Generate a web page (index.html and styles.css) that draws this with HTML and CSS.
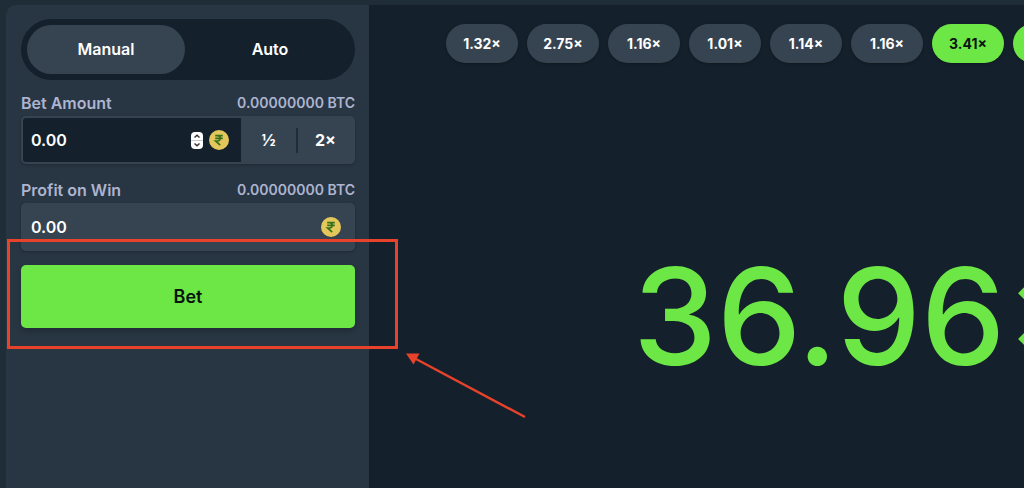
FILE: index.html
```html
<!DOCTYPE html>
<html lang="en">
<head>
<meta charset="utf-8">
<meta name="viewport" content="width=device-width, initial-scale=1">
<title>Bet</title>
<link rel="stylesheet" href="styles.css">
</head>
<body>
<svg class="defs" aria-hidden="true">
  <symbol id="rupee" viewBox="0 0 20 20">
    <circle cx="10" cy="10" r="10" fill="#e3c75b"/>
    <path d="M6.2 5.600h7.600M6.200 8.400h7.600M6.200 5.600h2.200c3.800 0 3.800 5.400 0 5.400H6.600l4.600 4.200" fill="none" stroke="#39701f" stroke-width="1.700"/>
  </symbol>
</svg>
<div class="game">
  <form class="sidebar">
    <div class="tabs">
      <button type="button" class="tab active">Manual</button>
      <button type="button" class="tab">Auto</button>
    </div>
    <div class="field">
      <div class="caption"><label for="amount">Bet Amount</label><span class="btc">0.00000000 BTC</span></div>
      <div class="group">
        <div class="box dark">
          <input id="amount" type="text" inputmode="decimal" value="0.00">
          <svg class="stepper" viewBox="0 0 12 17" aria-hidden="true">
            <rect width="12" height="17" rx="4" fill="#fff"/>
            <path d="M0 8.500h12" stroke="#c9cccf"/>
            <path d="M3.500 5.600L6 3.200l2.500 2.400M3.500 11.400L6 13.800l2.500-2.400" fill="none" stroke="#333" stroke-width="1.400"/>
          </svg>
          <svg class="coin" aria-hidden="true"><use href="#rupee"/></svg>
        </div>
        <button type="button" class="multiply">½</button>
        <span class="divider"></span>
        <button type="button" class="multiply">2×</button>
      </div>
    </div>
    <div class="field">
      <div class="caption"><label for="profit">Profit on Win</label><span class="btc">0.00000000 BTC</span></div>
      <div class="group">
        <div class="box">
          <input id="profit" type="text" value="0.00" readonly>
          <svg class="coin" aria-hidden="true"><use href="#rupee"/></svg>
        </div>
      </div>
    </div>
    <button type="button" class="bet">Bet</button>
  </form>
  <main class="stage">
    <div class="history">
      <button type="button" class="pill">1.32×</button>
      <button type="button" class="pill">2.75×</button>
      <button type="button" class="pill">1.16×</button>
      <button type="button" class="pill">1.01×</button>
      <button type="button" class="pill">1.14×</button>
      <button type="button" class="pill">1.16×</button>
      <button type="button" class="pill win">3.41×</button>
      <button type="button" class="pill win"></button>
    </div>
    <div class="result">36.96×</div>
  </main>
</div>
<div class="highlight"></div>
<svg class="arrow" viewBox="0 0 120 66" aria-hidden="true">
  <path d="M10 6L119 64" stroke="#e8432a" stroke-width="2.400"/>
  <path d="M0 0.500L13.500 0.500L7.500 11.500Z" fill="#e8432a"/>
</svg>
</body>
</html>
```

FILE: styles.css
```css
* {
  box-sizing: border-box;
}

body {
  margin: 0;
  min-height: 100vh;
  display: flex;
  padding: 5px 0 0 6px;
  background: #1f2d38;
  color: #fff;
  font-family: Inter, "Liberation Sans", sans-serif;
  font-size: 16px;
  font-weight: 600;
  overflow: hidden;
}

button,
input {
  font: inherit;
  color: inherit;
  background: none;
  border: 0;
  padding: 0;
  margin: 0;
}

.defs {
  position: absolute;
  width: 0;
  height: 0;
}

.game {
  flex: 1;
  min-width: 0;
  display: flex;
  border-top-left-radius: 10px;
  overflow: hidden;
}

.sidebar {
  flex: none;
  width: 363px;
  padding: 14px 14px 14px 15px;
  display: flex;
  flex-direction: column;
  gap: 14px;
  background: #283643;
}

.tabs {
  display: flex;
  gap: 6px;
  padding: 6px;
  border-radius: 32px;
  background: #14212c;
}

.tab {
  flex: 1;
  height: 49px;
  padding-bottom: 2px;
  border-radius: 25px;
}

.tab.active {
  background: #364452;
}

.field {
  display: flex;
  flex-direction: column;
  gap: 4px;
}

.field + .field {
  padding-top: 3px;
}

.caption {
  display: flex;
  align-items: center;
  justify-content: space-between;
  line-height: 18px;
  color: #adb4d0;
}

.btc {
  font-size: 14px;
}

.group {
  display: flex;
  align-items: center;
  padding: 2px;
  border-radius: 5px;
  background: #364452;
  box-shadow: 0 1px 3px rgba(0, 0, 0, 0.25);
}

.box {
  flex: 1;
  min-width: 0;
  height: 44px;
  display: flex;
  align-items: center;
  gap: 6px;
  padding: 0 12px 0 8px;
  border-radius: 3px 0 0 3px;
}

.box.dark {
  background: #14212c;
}

.box input {
  flex: 1;
  min-width: 0;
}

.stepper {
  width: 12px;
  height: 17px;
}

.coin {
  width: 20px;
  height: 20px;
}

.multiply {
  width: 55px;
  height: 44px;
  font-weight: 700;
}

.divider {
  width: 2px;
  height: 25px;
  background: #1f2d38;
}

.bet {
  height: 63px;
  border-radius: 5px;
  background: #6ce746;
  color: #0a1410;
  font-size: 18px;
  box-shadow: 0 3px 6px rgba(0, 0, 0, 0.2);
}

.stage {
  flex: 1;
  min-width: 0;
  overflow: hidden;
  background: #14212c;
}

.history {
  display: flex;
  gap: 9px;
  padding: 19px 0 0 77px;
}

.pill {
  flex: none;
  width: 72px;
  height: 39px;
  border-radius: 20px;
  background: #364452;
  font-size: 14px;
  font-weight: 700;
  box-shadow: 0 1px 3px rgba(0, 0, 0, 0.3);
}

.pill.win {
  background: #6ce746;
  color: #0a1410;
}

.result {
  padding: 173px 0 0 264px;
  color: #6ce746;
  font-size: 134px;
  font-weight: 500;
  line-height: 160px;
  white-space: nowrap;
}

.highlight {
  position: absolute;
  left: 7px;
  top: 239px;
  width: 391px;
  height: 110px;
  border: 3px solid #e8432a;
  pointer-events: none;
}

.arrow {
  position: absolute;
  left: 406px;
  top: 353px;
  width: 120px;
  height: 66px;
  pointer-events: none;
}
```
